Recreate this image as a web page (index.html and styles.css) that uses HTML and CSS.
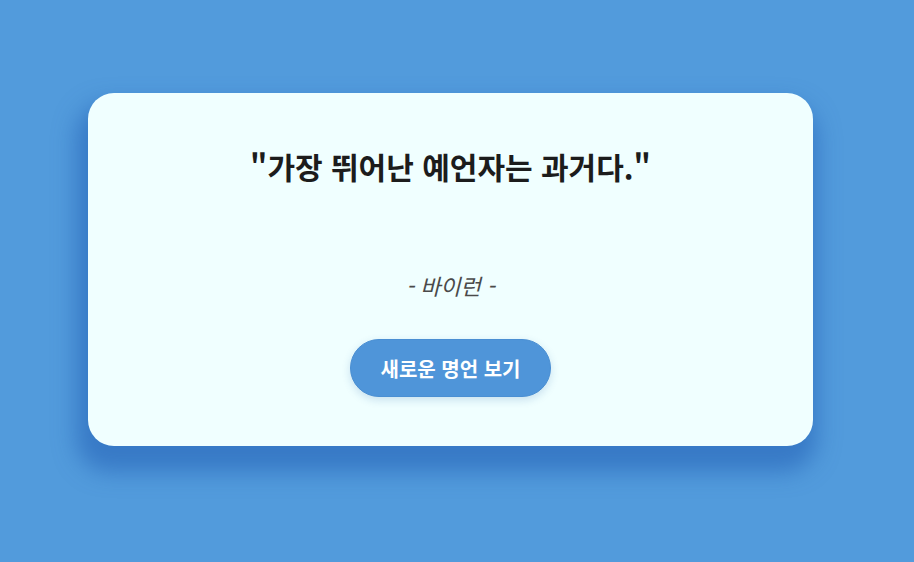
FILE: index.html
```html
<!DOCTYPE html>
<html lang="ko">
<head>
    <meta charset="UTF-8">
    <meta name="viewport" content="width=device-width, initial-scale=1.0">
    <title>오늘의 명언</title>
    <link rel="stylesheet" href="styles.css">
</head>
<body>
    <main class="wrapper">
        <section class="quote-card">
            <h1 class="quote-text">"가장 뛰어난 예언자는 과거다."</h1>
            <p class="quote-author">- 바이런 -</p>
            <button type="button" class="quote-btn">새로운 명언 보기</button>
        </section>
    </main>
</body>
</html>
```

FILE: styles.css
```css
html, body {
    margin: 0;
    padding: 0;
    background-color: #529bdc;
}
body {
    font-family: "Noto Sans CJK KR", "Noto Sans", sans-serif;
}
.wrapper {
    box-sizing: border-box;
    min-height: 100vh;
    padding: 93px 0 0 88px;
}
.quote-card {
    box-sizing: border-box;
    width: 725px;
    height: 353px;
    padding: 50px 40px 0;
    background: #f0ffff;
    border-radius: 26px;
    box-shadow: -4px 18px 22px 8px rgba(35, 95, 180, 0.55);
    text-align: center;
}
.quote-text {
    margin: 0;
    font-size: 30px;
    font-weight: 700;
    line-height: 46px;
    color: #1c1c1c;
}
.quote-author {
    margin: 81px 0 0;
    font-size: 22px;
    font-style: italic;
    line-height: 30px;
    color: #4a4a4a;
}
.quote-btn {
    margin-top: 39px;
    width: 201px;
    height: 58px;
    border: 1px solid #4a8fd3;
    border-radius: 30px;
    background: #4f95d9;
    color: white;
    font-family: inherit;
    font-size: 20px;
    font-weight: 700;
    cursor: pointer;
    box-shadow: 0 3px 8px rgba(40, 100, 170, 0.2);
}
```
